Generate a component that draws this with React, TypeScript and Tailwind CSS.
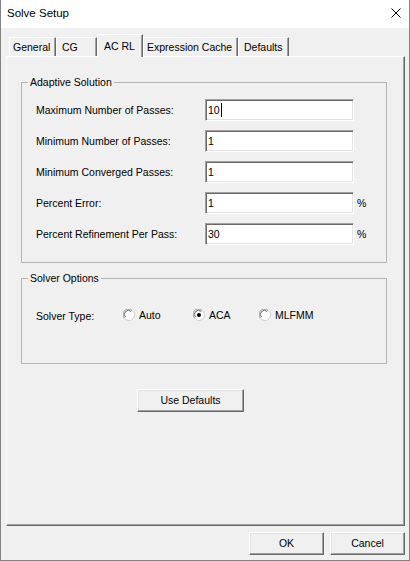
import React from "react";

const font = "font-['Liberation_Sans',Arial,sans-serif]";

function Tab({ label, width, pad, selected }: { label: string; width: string; pad: string; selected?: boolean }) {
  if (selected) {
    return (
      <div
        className={`${width} ${pad} h-[23px] -mb-[1px] relative z-10 bg-[#f0f0f0] border-t border-l border-white border-r border-r-[#696969] shadow-[inset_-1px_0_0_#a0a0a0] flex items-center whitespace-nowrap`}
      >
        {label}
      </div>
    );
  }
  return (
    <div
      className={`${width} ${pad} h-[19px] bg-[#f0f0f0] border-t border-l border-white border-r border-r-[#696969] shadow-[inset_-1px_0_0_#a0a0a0] flex items-center whitespace-nowrap`}
    >
      {label}
    </div>
  );
}

function Field({ label, value, pct, cursor }: { label: string; value: string; pct?: boolean; cursor?: boolean }) {
  return (
    <div className="flex items-center h-[22px]">
      <div className="w-[169px] shrink-0">{label}</div>
      <div className="w-[149px] h-[22px] bg-white border-t border-l border-[#a0a0a0] border-r border-b border-r-white border-b-white shadow-[inset_1px_1px_0_#696969,inset_-1px_-1px_0_#e3e3e3] flex items-center pl-[2px]">
        <span>{value}</span>
        {cursor && <span className="w-[1px] h-[14px] bg-black ml-[1px]" />}
      </div>
      {pct && <span className="ml-[3px]">%</span>}
    </div>
  );
}

function Radio({ label, checked, width }: { label: string; checked?: boolean; width: string }) {
  return (
    <div className={`${width} flex items-center gap-[4px]`}>
      <svg width="12" height="12" viewBox="0 0 12 12" className="shrink-0">
        <circle cx="6" cy="6" r="5.5" fill="#ffffff" stroke="#d0d0d0" />
        <path d="M1.5 9 A5 5 0 0 1 9 1.5" fill="none" stroke="#a0a0a0" strokeWidth="1" />
        <path d="M2.6 8.2 A3.9 3.9 0 0 1 8.2 2.6" fill="none" stroke="#696969" strokeWidth="1" />
        {checked && <circle cx="6" cy="6" r="2" fill="#000000" />}
      </svg>
      <span>{label}</span>
    </div>
  );
}

function Button({ label, width }: { label: string; width: string }) {
  return (
    <div
      className={`${width} h-[23px] bg-[#f0f0f0] border-t border-l border-white border-r border-b border-r-[#696969] border-b-[#696969] shadow-[inset_-1px_-1px_0_#a0a0a0,inset_1px_1px_0_#e3e3e3] flex items-center justify-center`}
    >
      {label}
    </div>
  );
}

export default function App() {
  return (
    <div
      className={`w-[410px] h-[561px] flex flex-col bg-[#f0f0f0] border-l border-r border-b border-[#838383] ${font} text-[10.5px] leading-[13px] text-black select-none overflow-hidden`}
    >
      <div className="h-[28px] shrink-0 bg-white flex items-center justify-between pl-[6px] pr-[8px] pb-[2px]">
        <span className="text-[11.5px] leading-[14px]">Solve Setup</span>
        <svg width="10" height="10" viewBox="0 0 10 10">
          <path d="M0.5 0.5L9.5 9.5M9.5 0.5L0.5 9.5" stroke="#000" strokeWidth="1" />
        </svg>
      </div>
      <div className="flex-1 flex flex-col pt-[6px] pl-[5px] pr-[4px]">
        <div className="h-[22px] flex items-end pl-[3px]">
          <Tab label="General" width="w-[47px]" pad="pl-[3px]" />
          <Tab label="CG" width="w-[41px]" pad="pl-[5px]" />
          <Tab label="AC RL" width="w-[46px]" pad="pl-[6px]" selected />
          <Tab label="Expression Cache" width="w-[95px]" pad="pl-[3px]" />
          <Tab label="Defaults" width="w-[51px]" pad="pl-[5px]" />
        </div>
        <div className="h-[470px] shrink-0 border-t border-l border-white border-r border-b border-r-[#696969] border-b-[#696969] shadow-[inset_-1px_-1px_0_#a0a0a0] pl-[14px] flex flex-col items-start">
          <fieldset className="mt-[19px] w-[366px] border border-[#b4b4b4] px-0 pt-[10px] pb-[17px]">
            <legend className="ml-[6px] px-[2px] leading-[13px]">Adaptive Solution</legend>
            <div className="flex flex-col gap-[9px] pl-[14px]">
              <Field label="Maximum Number of Passes:" value="10" cursor />
              <Field label="Minimum Number of Passes:" value="1" />
              <Field label="Minimum Converged Passes:" value="1" />
              <Field label="Percent Error:" value="1" pct />
              <Field label="Percent Refinement Per Pass:" value="30" pct />
            </div>
          </fieldset>
          <fieldset className="mt-[9px] w-[366px] border border-[#b4b4b4] px-0 pt-[23px] pb-[41px]">
            <legend className="ml-[6px] px-[2px] leading-[13px]">Solver Options</legend>
            <div className="flex items-center h-[14px] pl-[14px]">
              <div className="w-[87px] shrink-0 pt-[2px]">Solver Type:</div>
              <Radio label="Auto" width="w-[70px]" />
              <Radio label="ACA" width="w-[66px]" checked />
              <Radio label="MLFMM" width="w-[80px]" />
            </div>
          </fieldset>
          <div className="mt-[25px] ml-[116px]">
            <Button label="Use Defaults" width="w-[107px]" />
          </div>
        </div>
        <div className="flex justify-end gap-[6px] pt-[6px]">
          <Button label="OK" width="w-[75px]" />
          <Button label="Cancel" width="w-[75px]" />
        </div>
      </div>
    </div>
  );
}
